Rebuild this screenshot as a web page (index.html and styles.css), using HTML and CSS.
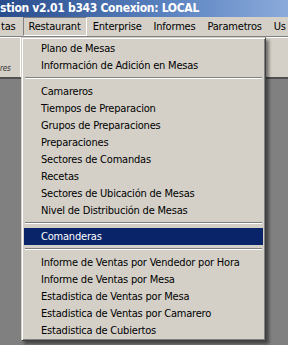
FILE: index.html
```html
<!DOCTYPE html>
<html lang="es">
<head>
    <meta charset="UTF-8">
    <title>Gestion</title>
    <link rel="stylesheet" href="styles.css">
</head>
<body>
    <div id="window">
        <div class="titlebar">stion v2.01 b343 Conexion: LOCAL</div>
        <ul class="menubar">
            <li class="first">tas</li>
            <li class="open">Restaurant</li>
            <li>Enterprise</li>
            <li>Informes</li>
            <li>Parametros</li>
            <li>Us</li>
        </ul>
        <div class="toolbar">
            <div class="tool-label">res</div>
        </div>
        <div class="client"></div>

        <ul class="dropdown">
            <li>Plano de Mesas</li>
            <li>Información de Adición en Mesas</li>
            <li class="sep"></li>
            <li>Camareros</li>
            <li>Tiempos de Preparacion</li>
            <li>Grupos de Preparaciones</li>
            <li>Preparaciones</li>
            <li>Sectores de Comandas</li>
            <li>Recetas</li>
            <li>Sectores de Ubicación de Mesas</li>
            <li>Nivel de Distribución de Mesas</li>
            <li class="sep"></li>
            <li class="selected">Comanderas</li>
            <li class="sep"></li>
            <li>Informe de Ventas por Vendedor por Hora</li>
            <li>Informe de Ventas por Mesa</li>
            <li>Estadistica de Ventas por Mesa</li>
            <li>Estadistica de Ventas por Camarero</li>
            <li>Estadistica de Cubiertos</li>
        </ul>
    </div>
</body>
</html>
```

FILE: styles.css
```css
*{
    margin: 0;
    padding: 0;
}
body{
    background: #808080;
    font-family: "DejaVu Sans Condensed", "DejaVu Sans", sans-serif;
    font-size: 11px;
    letter-spacing: -0.2px;
    color: #000;
}
ul{
    list-style: none;
}
#window{
    width: 288px;
    height: 345px;
    position: relative;
    overflow: hidden;
    display: flex;
    flex-direction: column;
}
.titlebar{
    height: 17px;
    line-height: 16px;
    background: linear-gradient(to right, #284c8c, #5d85c2 60%, #8aaada);
    color: #fff;
    font-weight: bold;
    font-size: 12px;
    letter-spacing: -0.3px;
    white-space: nowrap;
}
.menubar{
    height: 19px;
    background: #d4d0c8;
    display: flex;
    align-items: center;
    white-space: nowrap;
}
.menubar li{
    padding: 0 5px;
    height: 17px;
    line-height: 17px;
    border: 1px solid transparent;
}
.menubar li.first{
    padding-left: 0;
    padding-right: 6px;
}
.menubar li.open{
    border-color: #808080 #fff #fff #808080;
}
.toolbar{
    height: 40px;
    background: #d4d0c8;
    border-top: 1px solid #808080;
    box-shadow: inset 0 1px 0 #fff;
    border-bottom: 2px solid #505050;
    display: flex;
    align-items: flex-end;
}
.tool-label{
    width: 21px;
    height: 100%;
    border-right: 1px solid #fff;
    font-size: 8px;
    font-style: italic;
    color: #333;
    line-height: 14px;
    display: flex;
    align-items: flex-end;
    padding-bottom: 1px;
    box-sizing: border-box;
}
.client{
    flex: 1;
    background: #808080;
}
.dropdown{
    position: absolute;
    left: 21px;
    top: 37px;
    width: 245px;
    background: #d4d0c8;
    border: 1px solid;
    border-color: #d4d0c8 #404040 #404040 #d4d0c8;
    box-shadow: inset 1px 1px 0 #fff, inset -1px -1px 0 #808080, 3px 3px 3px rgba(0, 0, 0, .45);
    padding: 2px 2px 1px 2px;
    box-sizing: border-box;
}
.dropdown li{
    height: 17px;
    line-height: 17px;
    padding-left: 17px;
    white-space: nowrap;
}
.dropdown li.selected{
    background: #0a246a;
    color: #fff;
}
.dropdown li.sep{
    height: 9px;
    padding: 3px 0 0 0;
    margin: 0 1px;
    box-sizing: border-box;
}
.dropdown li.sep::before{
    content: "";
    display: block;
    border-top: 1px solid #808080;
    border-bottom: 1px solid #fff;
}
```
